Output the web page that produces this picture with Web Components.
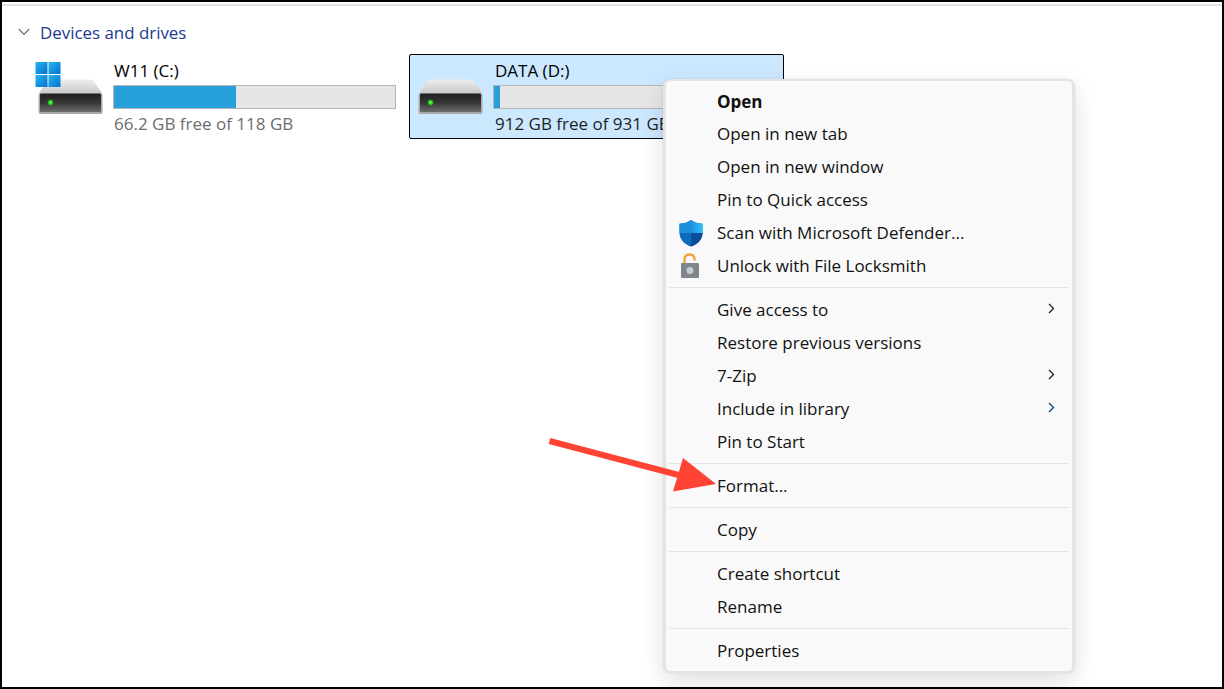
<!DOCTYPE html>
<html><head><meta charset="utf-8"><style>
html,body{margin:0;padding:0;height:100%;background:#fff}
body{font-family:"Open Sans","Noto Sans",sans-serif;overflow:hidden}
</style></head><body>
<explorer-window>
  <drives-section title="Devices and drives">
    <drive-tile name="W11 (C:)" free="66.2 GB free of 118 GB" used="43.4" system></drive-tile>
    <drive-tile name="DATA (D:)" free="912 GB free of 931 GB" used="2" selected></drive-tile>
  </drives-section>
  <context-menu slot="overlay">
    <menu-row bold>Open</menu-row>
    <menu-row>Open in new tab</menu-row>
    <menu-row>Open in new window</menu-row>
    <menu-row>Pin to Quick access</menu-row>
    <menu-row icon="shield">Scan with Microsoft Defender...</menu-row>
    <menu-row icon="lock">Unlock with File Locksmith</menu-row>
    <menu-sep></menu-sep>
    <menu-row sub>Give access to</menu-row>
    <menu-row>Restore previous versions</menu-row>
    <menu-row sub>7-Zip</menu-row>
    <menu-row sub="blue">Include in library</menu-row>
    <menu-row>Pin to Start</menu-row>
    <menu-sep></menu-sep>
    <menu-row>Format...</menu-row>
    <menu-sep></menu-sep>
    <menu-row>Copy</menu-row>
    <menu-sep></menu-sep>
    <menu-row>Create shortcut</menu-row>
    <menu-row>Rename</menu-row>
    <menu-sep></menu-sep>
    <menu-row>Properties</menu-row>
  </context-menu>
  <callout-arrow slot="overlay"></callout-arrow>
</explorer-window>
<script>
const def=(n,html,extra={})=>{customElements.define(n,class extends HTMLElement{
  constructor(){super();this.attachShadow({mode:'open'}).innerHTML=typeof html==='function'?html(this):html;}
  connectedCallback(){if(extra.init)extra.init(this)}
})};

def('explorer-window',`<style>
:host{display:block;position:relative;box-sizing:border-box;width:1224px;height:689px;border:2px solid #000;background:#fff;overflow:hidden}
.rule{height:2px;margin-top:2px;background:#e3e3e3}
</style><div class="rule"></div><slot></slot><slot name="overlay"></slot>`);

def('drives-section',`<style>
:host{display:block;padding:14px 0 0 16px}
.head{display:flex;align-items:center;gap:10px;height:24px;color:#1a3a8f;font-size:16.900px}
svg{display:block}
.tiles{display:flex;gap:5px;margin:10px 0 0 11px}
</style><div class="head"><svg width="12" height="8" viewBox="0 0 12 8"><path d="M.8 1 6 6.400 11.200 1" fill="none" stroke="#6b6b6b" stroke-width="1.100"/></svg><span id="t"></span></div><div class="tiles"><slot></slot></div>`,
{init:e=>{e.shadowRoot.getElementById('t').textContent=e.getAttribute('title')}});

const driveSvg=(id,sys)=>`<svg width="66" height="60" viewBox="0 0 66 60" style="display:block;overflow:visible">
<defs>
<linearGradient id="b${id}" x1="0" y1="0" x2="0" y2="1"><stop offset="0" stop-color="#1f1f1f"/><stop offset=".5" stop-color="#363636"/><stop offset="1" stop-color="#6c6c6c"/></linearGradient>
<linearGradient id="t${id}" x1="0" y1="0" x2="0" y2="1"><stop offset="0" stop-color="#ededed"/><stop offset="1" stop-color="#c9c9c9"/></linearGradient>
<radialGradient id="g${id}"><stop offset="0" stop-color="#6dff5e"/><stop offset=".55" stop-color="#1fd61f"/><stop offset="1" stop-color="#1fd61f" stop-opacity="0"/></radialGradient>
<linearGradient id="w${id}" x1="0" y1="0" x2="1" y2="1"><stop offset="0" stop-color="#2cb3ee"/><stop offset="1" stop-color="#0272d0"/></linearGradient>
</defs>
<path d="M12.500 18.500H52Q54 18.500 55.500 20L64.500 32.500H.5L9.500 20Q10.500 18.500 12.500 18.500Z" fill="url(#t${id})"/>
<rect x=".5" y="32.500" width="64" height="20.500" rx="2" fill="#a9a9a9"/>
<rect x="2" y="32.500" width="61" height="18.500" rx="1" fill="url(#b${id})"/>
<circle cx="12.500" cy="41.500" r="3.400" fill="url(#g${id})"/>
${sys?`<g fill="url(#w${id})"><rect x="-2.500" y="1" width="12" height="12"/><rect x="10.500" y="1" width="12" height="12"/><rect x="-2.500" y="14" width="12" height="12"/><rect x="10.500" y="14" width="12" height="12"/></g>`:''}
</svg>`;
let did=0;
def('drive-tile',e=>{const id=++did,sel=e.hasAttribute('selected'),sys=e.hasAttribute('system');return `<style>
:host{display:block;box-sizing:border-box;width:375px;height:85px;font-size:17px;color:#000}
.box{box-sizing:border-box;height:100%;display:flex;padding:5px 7px 0 8px;border:1px solid ${sel?'#000':'transparent'};border-radius:2px;background:${sel?'#cce8ff':'transparent'}}
.ic{width:75px;flex:none;padding-top:1px}
.txt{flex:1;min-width:0}
.name{height:22px;line-height:22px;padding-left:${sel?2:1}px}
.bar{box-sizing:border-box;height:24px;margin-top:3px;border:1px solid #b6b6b6;background:#e6e6e6}
.fill{height:100%;background:#26a0da}
.free{height:30px;line-height:30px;padding-left:${sel?2:1}px;color:${sel?'#1f1f1f':'#6d6d6d'};white-space:nowrap}
</style><div class="box"><div class="ic">${driveSvg(id,sys)}</div><div class="txt"><div class="name">${e.getAttribute('name')}</div><div class="bar"><div class="fill" style="width:${e.getAttribute('used')}%"></div></div><div class="free">${e.getAttribute('free')}</div></div></div>`});

def('context-menu',`<style>
:host{display:block;position:absolute;left:661px;top:77px;box-sizing:border-box;width:412px;height:594px;padding:4px 3px;background:#f9f9f9;border:solid #e4e4e4;border-width:2px 3px;border-radius:7px;box-shadow:0 0 2px rgba(0,0,0,.1),0 8px 24px rgba(0,0,0,.13);font-size:17px;color:#111}
</style><slot></slot>`);

const icons={
shield:`<svg width="24" height="27" viewBox="0 0 24 27"><defs><linearGradient id="s1" x1="0" y1="0" x2="1" y2="0"><stop offset="0" stop-color="#1d8fe0"/><stop offset="1" stop-color="#29c3f2"/></linearGradient></defs>
<path d="M12 0C9 2.400 5 3.500 .5 3.700V13C.5 20 6 24.500 12 26.500 18 24.500 23.500 20 23.500 13V3.700C19 3.500 15 2.400 12 0Z" fill="#0f6cbd"/>
<path d="M12 0V13H.5V3.700C5 3.500 9 2.400 12 0Z" fill="#1a8fdc"/><path d="M12 0C15 2.400 19 3.500 23.500 3.700V13H12Z" fill="url(#s1)"/>
<path d="M12 13H23.500C23.500 20 18 24.500 12 26.500Z" fill="#0a4f9c"/></svg>`,
lock:`<svg width="24" height="27" viewBox="0 0 24 27"><path d="M5.500 11V6C5.500 3 8 1.400 10.500 1.400S15.500 3 15.500 6V7.500" fill="none" stroke="#f2a33a" stroke-width="2.500"/><rect x="2" y="10" width="18" height="15" rx="1" fill="#7f858b"/><circle cx="11" cy="17.500" r="3.500" fill="#c4cbd2"/></svg>`};
def('menu-row',e=>{const ic=e.getAttribute('icon'),sub=e.getAttribute('sub'),bold=e.hasAttribute('bold');return `<style>
:host{display:flex;align-items:center;position:relative;height:${bold?33:31}px;padding-bottom:${bold?0:2}px;padding-left:48px;${bold?'font-weight:700;':''}white-space:nowrap}
.i{position:absolute;left:10px;top:3px;width:24px;height:27px}
.c{position:absolute;left:379px;top:9px}
svg{display:block}
</style>${ic?`<span class="i">${icons[ic]}</span>`:''}<slot></slot>${sub!==null?`<svg class="c" width="7" height="11" viewBox="0 0 7 11"><path d="M1 1 5.500 5.500 1 10" fill="none" stroke="${sub==='blue'?'#0b3a7a':'#2a1d10'}" stroke-width="1.300"/></svg>`:''}`});

def('menu-sep',`<style>:host{display:block;height:11px;box-sizing:border-box;padding-top:4px}div{height:1px;background:#e3e3e3}</style><div></div>`);

def('callout-arrow',`<style>:host{display:block;position:absolute;left:0;top:0;pointer-events:none}svg{display:block}</style>
<svg width="760" height="500" viewBox="2 2 760 500"><path d="M549.500 441 690 478" stroke="#ff4433" stroke-width="6" fill="none"/><path d="M683 458 716 484 673 491.500Z" fill="#ff4433"/></svg>`);
</script>
</body></html>
